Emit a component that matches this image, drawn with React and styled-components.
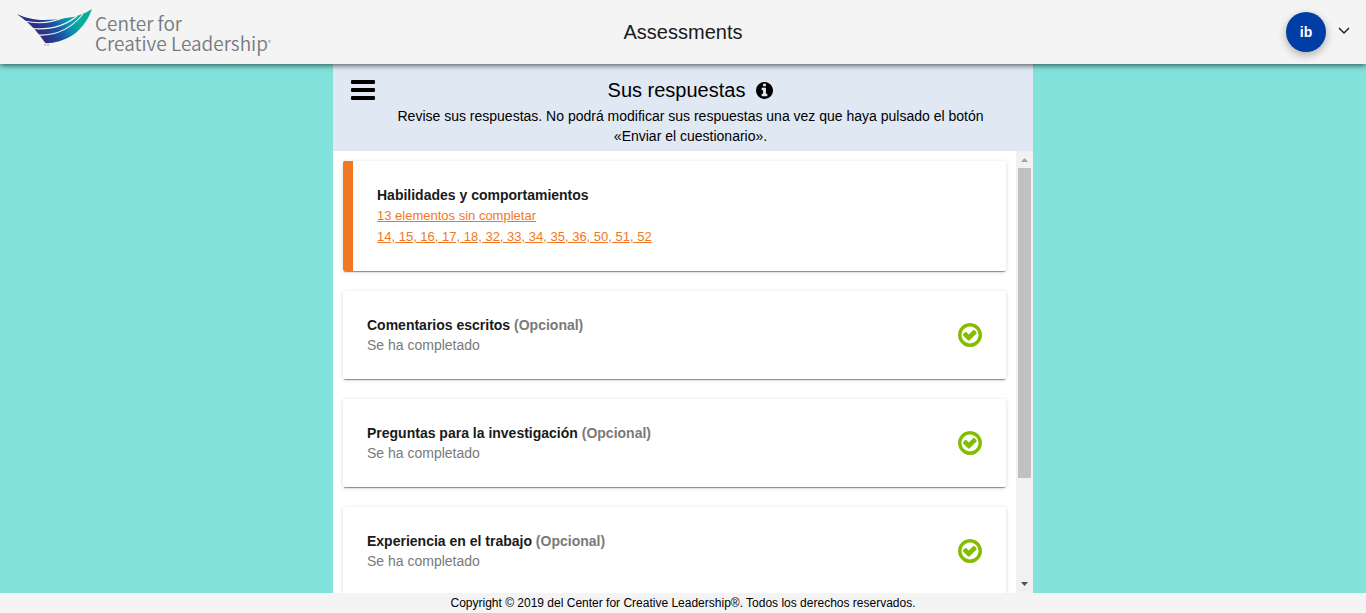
import React from "react";
import styled, { createGlobalStyle } from "styled-components";

const GlobalStyle = createGlobalStyle`
  *, *::before, *::after { box-sizing: border-box; }
  body {
    margin: 0;
    font-family: "Liberation Sans", Arial, sans-serif;
    font-size: 14px;
    line-height: 20px;
    color: #1a1a1a;
    background: #82e3dc;
  }
  h1, h2, h3, p, ul { margin: 0; padding: 0; }
`;

const Page = styled.div`
  display: flex;
  flex-direction: column;
  height: 100vh;
`;

const TopBar = styled.header`
  position: relative;
  z-index: 1;
  flex: none;
  display: grid;
  grid-template-columns: 1fr auto 1fr;
  align-items: center;
  height: 64px;
  padding: 0 16px;
  background: #f4f4f4;
  box-shadow: 0 1px 6px rgba(0, 0, 0, 0.7);
`;

const Brand = styled.a`
  justify-self: start;
  display: flex;
  align-items: center;
  gap: 3px;
  color: #757b7e;
  text-decoration: none;
`;

const BrandMark = styled.svg`
  display: block;
  width: 76px;
  height: 46px;
`;

const BrandName = styled.span`
  display: flex;
  flex-direction: column;
  padding-top: 2px;
  font-family: "Noto Sans CJK SC", "Open Sans", sans-serif;
  font-weight: 350;
  font-size: 19px;
  line-height: 20px;
  white-space: nowrap;
`;

const BrandLine = styled.span`
  display: flex;
  align-items: center;
  height: 20px;
`;

const Registered = styled.span`
  font-size: 6px;
  line-height: 6px;
`;

const AppTitle = styled.h1`
  font-size: 20px;
  font-weight: 400;
  line-height: 24px;
`;

const Account = styled.button`
  justify-self: end;
  display: flex;
  align-items: center;
  gap: 12px;
  padding: 0;
  border: 0;
  background: none;
  font: inherit;
  cursor: pointer;
`;

const Avatar = styled.span`
  display: flex;
  align-items: center;
  justify-content: center;
  width: 40px;
  height: 40px;
  border-radius: 50%;
  background: #003da5;
  color: #fff;
  font-size: 14px;
  font-weight: 700;
  box-shadow: 0 3px 8px rgba(0, 0, 0, 0.3);
`;

const Main = styled.main`
  flex: 1;
  min-height: 0;
  display: flex;
  flex-direction: column;
  width: 100%;
  max-width: 700px;
  margin: 0 auto;
  background: #fff;
`;

const PanelHead = styled.div`
  flex: none;
  display: flex;
  align-items: flex-start;
  gap: 10px;
  padding: 14px 37px 5px 18px;
  background: #e0e8f4;
  color: #000;
`;

const IconButton = styled.button`
  display: flex;
  padding: 0;
  border: 0;
  background: none;
  color: inherit;
  cursor: pointer;
`;

const PanelText = styled.div`
  flex: 1;
  text-align: center;
`;

const PanelTitleRow = styled.div`
  display: flex;
  align-items: center;
  justify-content: center;
  gap: 11px;
  margin-bottom: 4px;
`;

const PanelTitle = styled.h2`
  font-size: 20px;
  font-weight: 400;
  line-height: 24px;
`;

const ScrollArea = styled.div`
  flex: 1;
  min-height: 0;
  display: flex;
`;

const SectionList = styled.ul`
  flex: 1;
  display: flex;
  flex-direction: column;
  gap: 20px;
  padding: 10px;
  list-style: none;
  overflow-y: auto;
  scrollbar-width: none;
`;

const Card = styled.li`
  flex: none;
  display: flex;
  align-items: center;
  justify-content: space-between;
  padding: 24px;
  border-left: ${(p) => (p.$incomplete ? "10px solid #f27725" : "0")};
  border-radius: 2px;
  background: #fff;
  box-shadow: 0 2px 1px -1px rgba(0, 0, 0, 0.4), 0 1px 4px rgba(0, 0, 0, 0.16);
`;

const CardTitle = styled.h3`
  font-size: 14px;
  line-height: 20px;
`;

const Muted = styled.span`
  color: #7a7a7a;
`;

const Status = styled.p`
  color: #7a7a7a;
`;

const MissingLink = styled.a`
  display: block;
  color: #f27725;
  font-size: 13px;
  line-height: 21px;
`;

const ScrollTrack = styled.div`
  flex: none;
  display: flex;
  flex-direction: column;
  width: 17px;
  background: #f1f1f1;
`;

const ScrollArrow = styled.svg`
  flex: none;
  width: 17px;
  height: 17px;
`;

const ScrollLane = styled.div`
  flex: 1;
  padding: 0 2px;
`;

const ScrollThumb = styled.div`
  height: 76%;
  background: #c1c1c1;
`;

const Footer = styled.footer`
  flex: none;
  background: #f4f4f4;
  color: #000;
  font-size: 12px;
  line-height: 20px;
  text-align: center;
`;

function Logo() {
  return (
    <BrandMark viewBox="0 0 76 46" aria-hidden="true">
      <defs>
        <linearGradient id="wing" x1="0" x2="1" y1="0.3" y2="0">
          <stop offset="0.2" stopColor="#2b2f86" />
          <stop offset="0.42" stopColor="#1a56a6" />
          <stop offset="0.58" stopColor="#0d8fb0" />
          <stop offset="0.74" stopColor="#04b09c" />
        </linearGradient>
      </defs>
      <path
        fill="url(#wing)"
        d="M0.700 5C9 8.500 17 11 28 11C36 11 43 10 50 9C60 8 68 5 76 0C71 14 63 22 56 26.500C48 31.500 39 34 29.700 34.300C27 31 25 28 22.500 25C17 17.500 9 11 0.700 5Z"
      />
      <path
        fill="none"
        stroke="#f4f4f4"
        strokeWidth="1.100"
        d="M9 12.300C20 14.500 34 14.500 48 8.500M15 19.500C32 21 48 18 61 7M21 26C38 27 54 21 67 5"
      />
      <path fill="none" stroke="#9a9da0" strokeWidth="1" d="M28 36H30M31 36H33" />
    </BrandMark>
  );
}

function BarsIcon() {
  return (
    <svg width="24" height="24" viewBox="0 0 24 24" fill="currentColor" aria-hidden="true">
      <rect y="2" width="24" height="4" rx="1" />
      <rect y="10" width="24" height="4" rx="1" />
      <rect y="18" width="24" height="4" rx="1" />
    </svg>
  );
}

function InfoIcon() {
  return (
    <svg width="17" height="17" viewBox="128 128 1536 1536" fill="currentColor" aria-hidden="true">
      <path d="M1152 1376v-160q0-14-9-23t-23-9h-96v-512q0-14-9-23t-23-9h-320q-14 0-23 9t-9 23v160q0 14 9 23t23 9h96v320h-96q-14 0-23 9t-9 23v160q0 14 9 23t23 9h448q14 0 23-9t9-23zm-128-896v-160q0-14-9-23t-23-9h-192q-14 0-23 9t-9 23v160q0 14 9 23t23 9h192q14 0 23-9t9-23zm640 416q0 209-103 385.5t-279.5 279.5-385.5 103-385.5-103-279.5-279.5-103-385.5 103-385.5 279.5-279.5 385.5-103 385.5 103 279.5 279.5 103 385.5z" />
    </svg>
  );
}

function DoneIcon() {
  return (
    <svg width="24" height="24" viewBox="128 128 1536 1536" fill="#84bd00" role="img" aria-label="Completado">
      <path d="M1299 813l-422 422q-24 24-57 24t-57-24l-294-294q-24-24-24-57t24-57l102-102q24-24 57-24t57 24l135 135 263-263q24-24 57-24t57 24l102 102q24 24 24 57t-24 57zm141 83q0-148-73-273t-198-198-273-73-273 73-198 198-73 273 73 273 198 198 273 73 273-73 198-198 73-273zm224 0q0 209-103 385.5t-279.5 279.5-385.5 103-385.5-103-279.5-279.5-103-385.5 103-385.5 279.5-279.5 385.5-103 385.5 103 279.5 279.5 103 385.5z" />
    </svg>
  );
}

const optionalSections = [
  "Comentarios escritos",
  "Preguntas para la investigación",
  "Experiencia en el trabajo",
];

export default function App() {
  return (
    <Page>
      <GlobalStyle />
      <TopBar>
        <Brand href="#">
          <Logo />
          <BrandName>
            <BrandLine>Center for</BrandLine>
            <BrandLine>
              Creative Leadership<Registered>®</Registered>
            </BrandLine>
          </BrandName>
        </Brand>
        <AppTitle>Assessments</AppTitle>
        <Account type="button">
          <Avatar>ib</Avatar>
          <svg width="12" height="10" viewBox="0 0 12 10" fill="none" stroke="#222" strokeWidth="1.5" aria-hidden="true">
            <path d="M1 1L6 6L11 1" />
          </svg>
        </Account>
      </TopBar>
      <Main>
        <PanelHead>
          <IconButton type="button" aria-label="Menú">
            <BarsIcon />
          </IconButton>
          <PanelText>
            <PanelTitleRow>
              <PanelTitle>Sus respuestas</PanelTitle>
              <IconButton type="button" aria-label="Información">
                <InfoIcon />
              </IconButton>
            </PanelTitleRow>
            <p>
              Revise sus respuestas. No podrá modificar sus respuestas una vez que haya pulsado el botón «Enviar el
              cuestionario».
            </p>
          </PanelText>
        </PanelHead>
        <ScrollArea>
          <SectionList>
            <Card $incomplete>
              <div>
                <CardTitle>Habilidades y comportamientos</CardTitle>
                <MissingLink href="#">13 elementos sin completar</MissingLink>
                <MissingLink href="#">14, 15, 16, 17, 18, 32, 33, 34, 35, 36, 50, 51, 52</MissingLink>
              </div>
            </Card>
            {optionalSections.map((title) => (
              <Card key={title}>
                <div>
                  <CardTitle>
                    {title} <Muted>(Opcional)</Muted>
                  </CardTitle>
                  <Status>Se ha completado</Status>
                </div>
                <DoneIcon />
              </Card>
            ))}
          </SectionList>
          <ScrollTrack aria-hidden="true">
            <ScrollArrow viewBox="0 0 17 17">
              <path fill="#a3a3a3" d="M5 11L8.500 7L12 11Z" />
            </ScrollArrow>
            <ScrollLane>
              <ScrollThumb />
            </ScrollLane>
            <ScrollArrow viewBox="0 0 17 17">
              <path fill="#505050" d="M5 6L8.500 10L12 6Z" />
            </ScrollArrow>
          </ScrollTrack>
        </ScrollArea>
      </Main>
      <Footer>Copyright © 2019 del Center for Creative Leadership®. Todos los derechos reservados.</Footer>
    </Page>
  );
}
